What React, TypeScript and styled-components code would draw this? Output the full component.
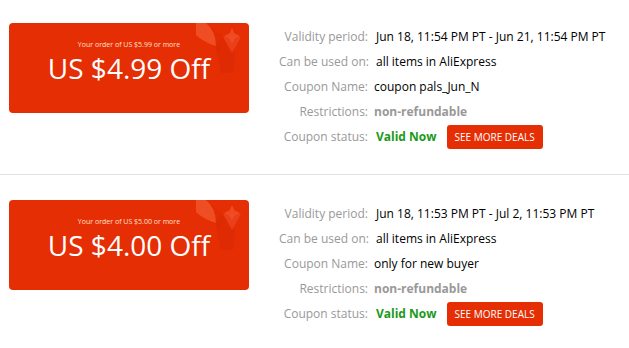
import React from "react";
import styled, { createGlobalStyle } from "styled-components";

const Global = createGlobalStyle`
  html, body { margin: 0; padding: 0; background: #fff; }
  body { font-family: "Open Sans", "Liberation Sans", sans-serif; }
`;

const List = styled.div`
  width: 629px;
  display: flex;
  flex-direction: column;
`;

const Item = styled.div`
  display: flex;
  align-items: flex-start;
  padding: 25px 0 25px 9px;
  border-bottom: 1px solid #e0e0e0;
  &:first-child { padding-top: 23px; }
  &:last-child { border-bottom: none; }
`;

const Card = styled.div`
  position: relative;
  width: 240px;
  height: 90px;
  flex: none;
  border-radius: 4px;
  background: #e62e04;
  overflow: hidden;
  display: flex;
  flex-direction: column;
  align-items: center;
  padding-top: 17px;
  box-sizing: border-box;
  color: #fff;
`;

const Deco = styled.svg`
  position: absolute;
  top: 0;
  right: 0;
`;

const MinOrder = styled.div`
  font-size: 7px;
  line-height: 9px;
  color: #ffe0cc;
  position: relative;
`;

const Amount = styled.div`
  font-size: 28px;
  line-height: 36px;
  margin-top: 1px;
  position: relative;
`;

const Details = styled.div`
  display: grid;
  grid-template-columns: 89px auto;
  column-gap: 6px;
  margin-left: 30px;
  padding-top: 1px;
`;

const Label = styled.div`
  text-align: right;
  font-size: 12px;
  line-height: 25px;
  color: #999;
  white-space: nowrap;
`;

const Value = styled.div<{ $indent?: boolean; $muted?: boolean }>`
  font-size: 12px;
  line-height: 25px;
  color: ${(p) => (p.$muted ? "#999" : "#000")};
  font-weight: ${(p) => (p.$muted ? 700 : 400)};
  padding-left: ${(p) => (p.$indent ? "2px" : "0")};
  white-space: nowrap;
  display: flex;
  align-items: center;
`;

const Status = styled.span`
  color: #1a9a1a;
  font-weight: 700;
`;

const DealsButton = styled.button`
  margin-left: 10px;
  height: 24px;
  padding: 0 8px;
  border: none;
  border-radius: 3px;
  background: #e62e04;
  color: #fff;
  font-family: inherit;
  font-size: 10px;
  text-transform: uppercase;
  cursor: pointer;
`;

type Coupon = {
  min: string;
  amount: string;
  period: string;
  name: string;
};

const coupons: Coupon[] = [
  {
    min: "US $5.99",
    amount: "US $4.99",
    period: "Jun 18, 11:54 PM PT - Jun 21, 11:54 PM PT",
    name: "coupon pals_Jun_N",
  },
  {
    min: "US $5.00",
    amount: "US $4.00",
    period: "Jun 18, 11:53 PM PT - Jul 2, 11:53 PM PT",
    name: "only for new buyer",
  },
];

function Decoration() {
  return (
    <Deco width="56" height="56" viewBox="0 0 56 56">
      <path d="M22 22 L30 14 L42 30 L40 50 L28 50 Z" fill="#d32703" opacity="0.4" />
      <path d="M3 0 L13 0 Q23 8 23 23 Q10 19 3 12 Z" fill="#f0532c" opacity="0.85" />
      <path d="M13 0 Q23 8 23 23 L26 30 L30 14 Z" fill="#da2a04" opacity="0.4" />
      <path d="M30 14 L48 14 L39 30 Z" fill="#eb4420" opacity="0.8" />
      <path d="M39 5 L41.5 10.5 L47 13 L41.5 15.5 L39 21 L36.5 15.5 L31 13 L36.5 10.5 Z" fill="#ef5029" opacity="0.85" />
    </Deco>
  );
}

export default function App() {
  return (
    <>
      <Global />
      <List>
        {coupons.map((c) => (
          <Item key={c.name}>
            <Card>
              <Decoration />
              <MinOrder>Your order of {c.min} or more</MinOrder>
              <Amount>{c.amount} Off</Amount>
            </Card>
            <Details>
              <Label>Validity period:</Label>
              <Value $indent>{c.period}</Value>
              <Label>Can be used on:</Label>
              <Value $indent>all items in AliExpress</Value>
              <Label>Coupon Name:</Label>
              <Value>{c.name}</Value>
              <Label>Restrictions:</Label>
              <Value $muted>non-refundable</Value>
              <Label>Coupon status:</Label>
              <Value $indent>
                <Status>Valid Now</Status>
                <DealsButton>See more deals</DealsButton>
              </Value>
            </Details>
          </Item>
        ))}
      </List>
    </>
  );
}
